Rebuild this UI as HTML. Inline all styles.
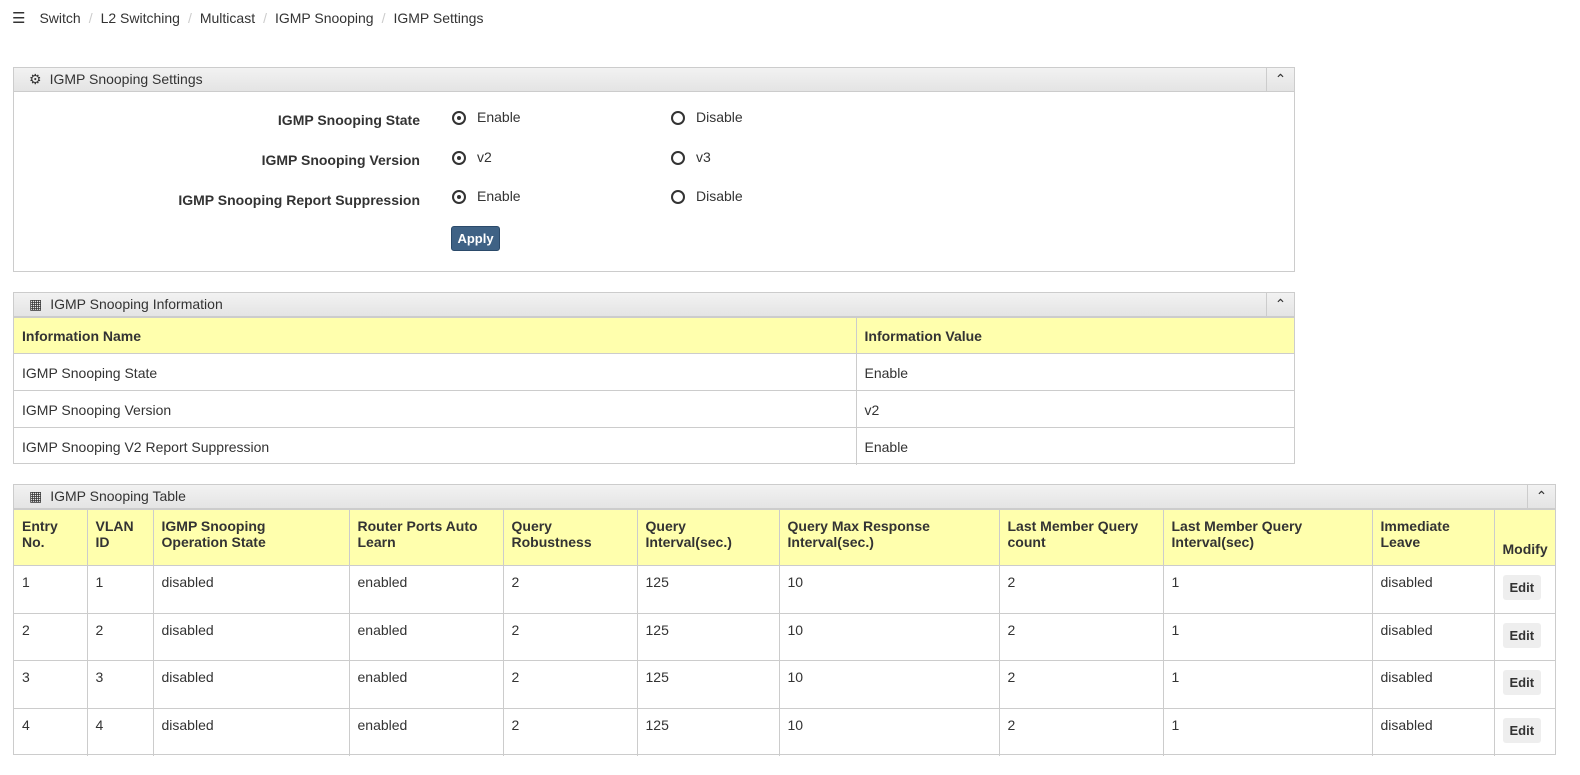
<!DOCTYPE html>
<html><head><style>
body{margin:0;background:#fff;font-family:"Liberation Sans",Arial,sans-serif;font-size:14px;color:#333;}
.bc{position:absolute;top:9px;left:12px;font-size:14px;}
.bc .sep{color:#ccc;padding:0 8px;}
.panel{position:absolute;border:1px solid #ccc;box-sizing:border-box;}
.ph{height:24px;background:linear-gradient(#f2f2f2,#e4e4e4);border-bottom:1px solid #ccc;box-sizing:border-box;line-height:23px;padding-left:15px;font-size:14px;position:relative;}
.ph .car{position:absolute;right:0;top:0;width:27px;height:23px;border-left:1px solid #ccc;text-align:center;}
table{border-collapse:collapse;table-layout:fixed;width:100%;}
td,th{border:1px solid #ccc;text-align:left;vertical-align:top;padding:8px;}
th{background:#ffffad;font-weight:bold;}
tr td:first-child,tr th:first-child{border-left:none}
tr td:last-child,tr th:last-child{border-right:none}
.lbl{position:absolute;font-weight:bold;text-align:right;right:874px;width:400px;}
.rad{position:absolute;}
.rad i{display:inline-block;width:10px;height:10px;border:2px solid #333;border-radius:50%;vertical-align:-3px;margin-right:11px;position:relative;}
.rad i.on:after{content:"";position:absolute;left:3px;top:3px;width:4px;height:4px;border-radius:50%;background:#333;}
.btn{position:absolute;left:450px;top:158px;width:49px;height:25px;background:#3f6285;border:1px solid #2b4a6a;border-radius:3px;box-sizing:border-box;color:#fff;font-weight:bold;font-size:13px;text-align:center;line-height:23px;}
.edit{display:inline-block;background:#eee;border-radius:3px;font-weight:bold;font-size:13px;padding:5px 7px;margin-top:1px;}
</style></head><body>
<div class="bc"><span style="font-size:15px;margin-right:14px">&#9776;</span>Switch<span class="sep">/</span>L2 Switching<span class="sep">/</span>Multicast<span class="sep">/</span>IGMP Snooping<span class="sep">/</span>IGMP Settings</div>

<div class="panel" style="left:13px;top:67px;width:1282px;height:205px;">
<div class="ph"><span style="margin-right:8px">&#9881;</span>IGMP Snooping Settings<span class="car">&#8963;</span></div>
<div class="lbl" style="top:44px">IGMP Snooping State</div>
<div class="rad" style="left:438px;top:41px"><i class="on"></i>Enable</div>
<div class="rad" style="left:657px;top:41px"><i></i>Disable</div>
<div class="lbl" style="top:84px">IGMP Snooping Version</div>
<div class="rad" style="left:438px;top:81px"><i class="on"></i>v2</div>
<div class="rad" style="left:657px;top:81px"><i></i>v3</div>
<div class="lbl" style="top:124px">IGMP Snooping Report Suppression</div>
<div class="rad" style="left:438px;top:120px"><i class="on"></i>Enable</div>
<div class="rad" style="left:657px;top:120px"><i></i>Disable</div>
<div class="btn" style="left:437px">Apply</div>
</div>

<div class="panel" style="left:13px;top:292px;width:1282px;height:172px;">
<div class="ph"><span style="margin-right:8px">&#9638;</span>IGMP Snooping Information<span class="car">&#8963;</span></div>
<table><colgroup><col style="width:842px"><col></colgroup>
<tr style="height:36px"><th style="padding-top:10px">Information Name</th><th style="padding-top:10px">Information Value</th></tr>
<tr style="height:37px"><td style="padding-top:11px">IGMP Snooping State</td><td style="padding-top:11px">Enable</td></tr>
<tr style="height:37px"><td style="padding-top:11px">IGMP Snooping Version</td><td style="padding-top:11px">v2</td></tr>
<tr style="height:37px;"><td style="padding-top:11px;border-bottom:none">IGMP Snooping V2 Report Suppression</td><td style="padding-top:11px;border-bottom:none">Enable</td></tr>
</table></div>

<div class="panel" style="left:13px;top:484px;width:1543px;height:271px;">
<div class="ph"><span style="margin-right:8px">&#9638;</span>IGMP Snooping Table<span class="car">&#8963;</span></div>
<table><colgroup><col style="width:73px"><col style="width:66px"><col style="width:196px"><col style="width:154px"><col style="width:134px"><col style="width:142px"><col style="width:220px"><col style="width:164px"><col style="width:209px"><col style="width:122px"><col></colgroup>
<tr style="height:56px"><th>Entry<br>No.</th><th>VLAN<br>ID</th><th>IGMP Snooping<br>Operation State</th><th>Router Ports Auto<br>Learn</th><th>Query<br>Robustness</th><th>Query<br>Interval(sec.)</th><th>Query Max Response<br>Interval(sec.)</th><th>Last Member Query<br>count</th><th>Last Member Query<br>Interval(sec)</th><th>Immediate<br>Leave</th><th style="vertical-align:bottom">Modify</th></tr>
<tr style="height:48px"><td>1</td><td>1</td><td>disabled</td><td>enabled</td><td>2</td><td>125</td><td>10</td><td>2</td><td>1</td><td>disabled</td><td><span class="edit">Edit</span></td></tr>
<tr style="height:47px"><td>2</td><td>2</td><td>disabled</td><td>enabled</td><td>2</td><td>125</td><td>10</td><td>2</td><td>1</td><td>disabled</td><td><span class="edit">Edit</span></td></tr>
<tr style="height:48px"><td>3</td><td>3</td><td>disabled</td><td>enabled</td><td>2</td><td>125</td><td>10</td><td>2</td><td>1</td><td>disabled</td><td><span class="edit">Edit</span></td></tr>
<tr style="height:47px"><td style="border-bottom:none">4</td><td style="border-bottom:none">4</td><td style="border-bottom:none">disabled</td><td style="border-bottom:none">enabled</td><td style="border-bottom:none">2</td><td style="border-bottom:none">125</td><td style="border-bottom:none">10</td><td style="border-bottom:none">2</td><td style="border-bottom:none">1</td><td style="border-bottom:none">disabled</td><td style="border-bottom:none"><span class="edit">Edit</span></td></tr>
</table></div>
</body></html>
